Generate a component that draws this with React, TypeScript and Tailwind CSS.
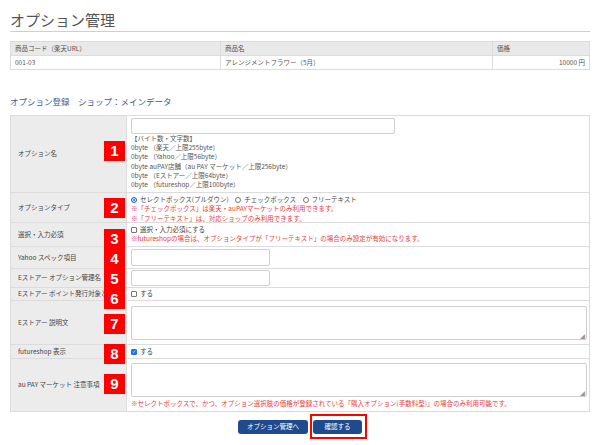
const font = { fontFamily: '"Noto Sans CJK JP", "Noto Sans", sans-serif' };

function Badge({ n, top }: { n: number; top: string }) {
  return (
    <div
      className={`absolute left-[93px] ${top} w-[21px] h-[20px] bg-[#ff0000] text-white flex items-center justify-center text-[15px] font-bold font-['Liberation_Sans',Arial,sans-serif]`}
    >
      {n}
    </div>
  );
}

function Radio({ on }: { on?: boolean }) {
  return (
    <span
      className={`inline-block w-[6px] h-[6px] rounded-full border mr-[3px] align-[-0.5px] ${
        on ? "border-[#1a73e8] bg-[#1a73e8] shadow-[inset_0_0_0_1px_white]" : "border-[#777] bg-white"
      }`}
    />
  );
}

function Check({ on }: { on?: boolean }) {
  return (
    <span
      className={`inline-flex items-center justify-center w-[6px] h-[6px] rounded-[1px] border mr-[3px] align-[-0.5px] ${
        on ? "border-[#1a73e8] bg-[#1a73e8]" : "border-[#777] bg-white"
      }`}
    >
      {on && (
        <svg viewBox="0 0 8 8" className="w-[5px] h-[5px]">
          <path d="M1.5 4.2 L3.3 6 L6.5 2" stroke="white" strokeWidth="1.4" fill="none" />
        </svg>
      )}
    </span>
  );
}

function Row({ label, h, children, className = "" }: { label: string; h: string; children?: React.ReactNode; className?: string }) {
  return (
    <div className={`flex border-b border-[#dcdcdc] ${h}`}>
      <div className="w-[116px] shrink-0 bg-[#ececec] border-r border-[#dcdcdc] flex items-center pl-[7px] text-[6.5px] text-[#444] whitespace-nowrap overflow-hidden">
        <span className="max-w-[86px] overflow-hidden">{label}</span>
      </div>
      <div className={`flex-1 pl-[4px] pr-[2px] ${className}`}>{children}</div>
    </div>
  );
}

export default function App() {
  return (
    <div className="w-[600px] h-[445px] bg-white px-[10px] text-[#444]" style={font}>
      <h1 className="pt-[11px] pb-[2px] text-[15px] leading-[18px] text-[#555] font-normal border-b border-[#cfcfcf]">
        オプション管理
      </h1>

      {/* product table */}
      <div className="mt-[9px] border border-[#dcdcdc] text-[6.5px] text-[#555]">
        <div className="flex h-[14px] bg-[#e9e9e9] border-b border-[#dcdcdc]">
          <div className="w-[210px] pl-[4px] flex items-center border-r border-[#dcdcdc]">商品コード（楽天URL）</div>
          <div className="w-[272px] pl-[4px] flex items-center border-r border-[#dcdcdc]">商品名</div>
          <div className="flex-1 pl-[4px] flex items-center">価格</div>
        </div>
        <div className="flex h-[13px]">
          <div className="w-[210px] pl-[4px] flex items-center border-r border-[#dcdcdc]">001-03</div>
          <div className="w-[272px] pl-[4px] flex items-center border-r border-[#dcdcdc]">アレンジメントフラワー（5月）</div>
          <div className="flex-1 pr-[4px] flex items-center justify-end">10000 円</div>
        </div>
      </div>

      <h2 className="mt-[25px] text-[8.5px] leading-[12px] text-[#3d5c9c] font-normal">
        オプション登録　ショップ：メインデータ
      </h2>

      {/* form */}
      <div className="relative mt-[8px] border border-b-0 border-[#dcdcdc] text-[6.5px]">
        <Row label="オプション名" h="h-[77px]" className="pt-[2px]">
          <div className="w-[264px] h-[16px] border border-[#cfcfcf] rounded-[2px] bg-white" />
          <div className="leading-[9.2px] text-[#555]">
            <div>【バイト数・文字数】</div>
            <div>0byte （楽天／上限255byte）</div>
            <div>0byte （Yahoo／上限56byte）</div>
            <div>0byte auPAY店舗（au PAY マーケット／上限256byte）</div>
            <div>0byte （Eストアー／上限64byte）</div>
            <div>0byte （futureshop／上限100byte）</div>
          </div>
        </Row>
        <Row label="オプションタイプ" h="h-[30px]" className="pt-[2px] leading-[9.3px]">
          <div className="text-[#444]">
            <Radio on />セレクトボックス(プルダウン)　<Radio />チェックボックス　<Radio />フリーテキスト
          </div>
          <div className="text-[#ea3a3a]">※「チェックボックス」は楽天・auPAYマーケットのみ利用できます。</div>
          <div className="text-[#ea3a3a]">※「フリーテキスト」は、対応ショップのみ利用できます。</div>
        </Row>
        <Row label="選択・入力必須" h="h-[24px]" className="pt-[2px] leading-[9.3px]">
          <div className="text-[#444]"><Check />選択・入力必須にする</div>
          <div className="text-[#ea3a3a]">※futureshopの場合は、オプションタイプが「フリーテキスト」の場合のみ設定が有効になります。</div>
        </Row>
        <Row label="Yahoo スペック項目" h="h-[22px]" className="flex items-center">
          <div className="w-[139px] h-[17px] border border-[#cfcfcf] rounded-[2px] bg-white" />
        </Row>
        <Row label="Eストアー オプション管理名" h="h-[19px]" className="flex items-center">
          <div className="w-[139px] h-[16px] border border-[#cfcfcf] rounded-[2px] bg-white" />
        </Row>
        <Row label="Eストアー ポイント発行対象とする" h="h-[13px]" className="flex items-center">
          <div className="text-[#444]"><Check />する</div>
        </Row>
        <Row label="Eストアー 説明文" h="h-[44px]" className="pt-[5px]">
          <div className="relative h-[34px] border border-[#cfcfcf] rounded-[2px] bg-white">
            <span className="absolute right-[1px] bottom-[1px] text-[5px] leading-[5px] text-[#999]">◢</span>
          </div>
        </Row>
        <Row label="futureshop 表示" h="h-[14px]" className="flex items-center">
          <div className="text-[#444]"><Check on />する</div>
        </Row>
        <Row label="au PAY マーケット 注意事項" h="h-[53px]" className="pt-[4px]">
          <div className="relative h-[34px] border border-[#cfcfcf] rounded-[2px] bg-white">
            <span className="absolute right-[1px] bottom-[1px] text-[5px] leading-[5px] text-[#999]">◢</span>
          </div>
          <div className="mt-[2px] leading-[9px] text-[#ea3a3a]">
            ※セレクトボックスで、かつ、オプション選択肢の価格が登録されている「購入オプション(手数料型)」の場合のみ利用可能です。
          </div>
        </Row>

        <Badge n={1} top="top-[25px]" />
        <Badge n={2} top="top-[82px]" />
        <Badge n={3} top="top-[113px]" />
        <Badge n={4} top="top-[133px]" />
        <Badge n={5} top="top-[153px]" />
        <Badge n={6} top="top-[173px]" />
        <Badge n={7} top="top-[198px]" />
        <Badge n={8} top="top-[228px]" />
        <Badge n={9} top="top-[258px]" />
      </div>

      {/* buttons */}
      <div className="mt-[8px] flex justify-center gap-[5px] text-[6.5px]">
        <button className="w-[70px] h-[14px] rounded-[3px] bg-[#1f4b8e] text-white flex items-center justify-center">
          オプション管理へ
        </button>
        <div className="relative">
          <button className="w-[49px] h-[14px] rounded-[3px] bg-[#1f4b8e] text-white flex items-center justify-center">
            確認する
          </button>
          <span className="absolute -left-[3px] -right-[5px] -top-[6px] -bottom-[5px] border-2 border-[#ff0000]" />
        </div>
      </div>
    </div>
  );
}
